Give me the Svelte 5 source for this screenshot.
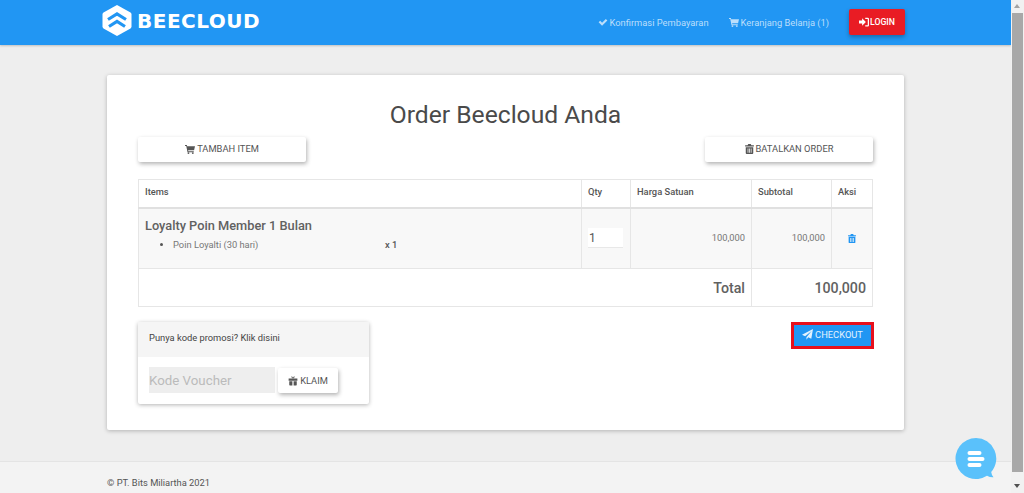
<script>
	const blue = '#2196f3';
</script>

<div class="shell">
	<div class="page">
		<header class="nav">
			<a class="brand" href="#top">
				<svg width="30" height="33" viewBox="0 0 30 33">
					<path d="M15 1 L28.5 8.6 Q29.5 9.2 29.5 10.4 V22.6 Q29.5 23.8 28.5 24.4 L15 32 L1.5 24.4 Q.5 23.8 .5 22.6 V10.4 Q.5 9.2 1.5 8.6Z" fill="#fff" />
					<path d="M6 15.5 L15 10 L24 15.5 M7 22.5 L15 17.5 L23 22.5" fill="none" stroke={blue} stroke-width="3.2" />
				</svg>
				<span class="brand-name">BEECLOUD</span>
			</a>
			<nav class="links">
				<a href="#top">
					<svg width="10" height="10" viewBox="0 0 16 16"><path d="M1 8.5 L3.5 6 L6.5 9 L12.5 3 L15 5.5 L6.5 14Z" fill="currentColor" /></svg>
					Konfirmasi Pembayaran
				</a>
				<a href="#top">
					<svg width="10" height="10" viewBox="0 0 16 16"><path d="M0 1.5h3l.5 2H16l-1.5 6.5H5l.3 1.500H14v1.500H4L2 3H0Z" fill="currentColor" /><circle cx="5.500" cy="14.500" r="1.500" fill="currentColor" /><circle cx="12.500" cy="14.500" r="1.500" fill="currentColor" /></svg>
					Keranjang Belanja (1)
				</a>
				<button class="login">
					<svg width="10" height="10" viewBox="0 0 16 16"><path d="M0 5.500h5V2l6 6-6 6v-3.500H0Z M10 1h4a2 2 0 0 1 2 2v10a2 2 0 0 1-2 2h-4v-2h4V3h-4Z" fill="currentColor" /></svg>
					LOGIN
				</button>
			</nav>
		</header>

		<main class="main">
			<section class="card">
				<h1>Order Beecloud Anda</h1>
				<div class="actions">
					<button class="btn wide">
						<svg width="10" height="10" viewBox="0 0 16 16"><path d="M0 1.500h3l.5 2H16l-1.500 6.500H5l.3 1.500H14v1.500H4L2 3H0Z" fill="currentColor" /><circle cx="5.500" cy="14.500" r="1.500" fill="currentColor" /><circle cx="12.500" cy="14.500" r="1.500" fill="currentColor" /></svg>
						TAMBAH ITEM
					</button>
					<button class="btn wide">
						<svg width="9" height="10" viewBox="0 0 14 16"><path d="M5 0h4l1 2h4v2H0V2h4ZM1 5h12v9.500a1.500 1.500 0 0 1-1.500 1.500h-9A1.500 1.500 0 0 1 1 14.500ZM4 7v7h1.200V7Zm2.400 0v7h1.200V7ZM9 7v7h1.200V7Z" fill="currentColor" fill-rule="evenodd" /></svg>
						BATALKAN ORDER
					</button>
				</div>

				<table>
					<colgroup>
						<col style="width: 443px" />
						<col style="width: 49px" />
						<col style="width: 121px" />
						<col style="width: 80px" />
						<col style="width: 41px" />
					</colgroup>
					<thead>
						<tr>
							<th>Items</th>
							<th>Qty</th>
							<th>Harga Satuan</th>
							<th>Subtotal</th>
							<th>Aksi</th>
						</tr>
					</thead>
					<tbody>
						<tr class="item">
							<td>
								<h4>Loyalty Poin Member 1 Bulan</h4>
								<ul>
									<li><span class="li-name">Poin Loyalti (30 hari)</span><b>x 1</b></li>
								</ul>
							</td>
							<td><input class="qty" value="1" /></td>
							<td class="num">100,000</td>
							<td class="num">100,000</td>
							<td class="aksi">
								<svg width="8" height="9" viewBox="0 0 14 16"><path d="M5 0h4l1 2h4v2H0V2h4ZM1 5h12v9.500a1.500 1.500 0 0 1-1.500 1.500h-9A1.500 1.500 0 0 1 1 14.500ZM4 7v7h1.200V7Zm2.400 0v7h1.200V7ZM9 7v7h1.200V7Z" fill="currentColor" fill-rule="evenodd" /></svg>
							</td>
						</tr>
						<tr class="total">
							<td colspan="3">Total</td>
							<td colspan="2">100,000</td>
						</tr>
					</tbody>
				</table>

				<div class="bottom">
					<div class="promo">
						<div class="promo-head">Punya kode promosi? Klik disini</div>
						<div class="promo-body">
							<input class="voucher" placeholder="Kode Voucher" />
							<button class="btn klaim">
								<svg width="10" height="10" viewBox="0 0 16 16"><path d="M1 4h14v3.500H1ZM2 8.500h5V15H3a1 1 0 0 1-1-1Zm7 0h5V14a1 1 0 0 1-1 1H9ZM8 4 5 1.500C6.500-.5 8 1.500 8 4Zm0 0 3-2.500C9.500-.5 8 1.500 8 4Z" fill="currentColor" /></svg>
								KLAIM
							</button>
						</div>
					</div>
					<button class="checkout">
						<svg width="11" height="11" viewBox="0 0 16 16"><path d="M16 0 13.500 14 9 12l-2.500 3.500V12L14 3 4.500 10.500 0 8.500Z" fill="currentColor" /></svg>
						CHECKOUT
					</button>
				</div>
			</section>
		</main>

		<footer class="foot">© PT. Bits Miliartha 2021</footer>
	</div>

	<div class="scrollbar">
		<span class="arrow up"></span>
		<span class="thumb"></span>
		<span class="arrow down"></span>
	</div>

	<div class="chat">
		<svg width="44" height="44" viewBox="0 0 44 44">
			<path d="M22 1a20.500 20.500 0 1 0 11 37.800q3 1.700 6.500 1.500-2-2.500-2.300-5.300A20.500 20.500 0 0 0 22 1Z" fill="#5ac1fb" />
			<rect x="13.500" y="14" width="14" height="4" rx="2" fill="#fff" />
			<rect x="13.500" y="20" width="17" height="4" rx="2" fill="#fff" />
			<rect x="13.500" y="26" width="14" height="4" rx="2" fill="#fff" />
		</svg>
	</div>
</div>

<style>
	:global(body) {
		margin: 0;
		overflow: hidden;
	}
	.shell {
		display: flex;
		height: 493px;
		font-family: Roboto, 'Liberation Sans', sans-serif;
		color: #555;
		overflow: hidden;
		position: relative;
	}
	.page {
		flex: 1;
		min-width: 0;
		background: #eee;
		display: flex;
		flex-direction: column;
	}
	button {
		font-family: inherit;
		border: 0;
		cursor: pointer;
	}

	.nav {
		height: 45px;
		flex-shrink: 0;
		background: #2196f3;
		box-shadow: 0 1px 2px rgba(0, 0, 0, 0.2);
		display: flex;
		align-items: center;
		justify-content: space-between;
		padding: 0 106px 0 102px;
	}
	.brand {
		display: flex;
		align-items: center;
		gap: 5px;
		text-decoration: none;
		margin-top: -4px;
	}
	.brand-name {
		font-family: 'DejaVu Sans', sans-serif;
		font-weight: 700;
		font-size: 20px;
		letter-spacing: 0.5px;
		color: #fff;
	}
	.links {
		display: flex;
		align-items: center;
		margin-top: -1px;
	}
	.links a {
		color: #bbdefb;
		text-decoration: none;
		font-size: 9.330px;
		display: flex;
		align-items: center;
		gap: 2px;
		margin-right: 20px;
	}
	.login {
		width: 56px;
		height: 26px;
		background: #e91c24;
		color: #fff;
		border-radius: 2px;
		font-size: 8.700px;
		font-weight: 500;
		display: flex;
		align-items: center;
		justify-content: center;
		gap: 1px;
		box-shadow: 0 2px 4px rgba(0, 0, 0, 0.3);
	}

	.main {
		flex: 1;
		padding: 30px 107px 0;
	}
	.card {
		width: 797px;
		height: 355px;
		box-sizing: border-box;
		background: #fff;
		border-radius: 2px;
		box-shadow: 0 1px 4px rgba(0, 0, 0, 0.25);
		padding: 24px 31px 0;
	}
	h1 {
		margin: 0;
		text-align: center;
		font-size: 24.650px;
		font-weight: 400;
		line-height: 32px;
		color: #4a4a4a;
	}
	.actions {
		display: flex;
		justify-content: space-between;
		margin-top: 6px;
		width: 735px;
	}
	.btn {
		background: #fff;
		color: #555;
		font-size: 9.330px;
		border-radius: 2px;
		height: 25px;
		padding: 0 0 2px;
		box-shadow: 1px 2px 4px rgba(0, 0, 0, 0.3);
		display: flex;
		align-items: center;
		justify-content: center;
		gap: 2px;
	}
	.wide {
		width: 168px;
	}

	table {
		width: 734px;
		margin-top: 17px;
		border-collapse: collapse;
		table-layout: fixed;
		font-size: 9.330px;
	}
	th,
	td {
		border: 1px solid #e6e6e6;
		padding: 0 6px;
	}
	th {
		height: 28px;
		text-align: left;
		font-weight: 500;
		padding-bottom: 3px;
		border-bottom-width: 2px;
		border-bottom-color: #e0e0e0;
		box-sizing: border-box;
	}
	.item td {
		height: 61px;
		background: #f8f8f8;
		box-sizing: border-box;
	}
	.item td:first-child {
		vertical-align: top;
		padding-top: 8px;
	}
	h4 {
		margin: 0;
		font-size: 12.800px;
		line-height: 17px;
		font-weight: 500;
		color: #616161;
	}
	ul {
		margin: 4px 0 0;
		padding-left: 28px;
		line-height: 14px;
	}
	.li-name {
		display: inline-block;
		width: 212px;
		color: #777;
	}
	li b {
		font-weight: 500;
	}
	.qty {
		width: 35px;
		height: 20px;
		box-sizing: border-box;
		border: 0;
		border-bottom: 1px solid #e8e8e8;
		background: #fff;
		font: 12px Roboto, sans-serif;
		color: #555;
		padding: 0 1px;
		display: block;
	}
	.item .num {
		text-align: right;
		color: #777;
		padding-bottom: 2px;
	}
	.aksi {
		color: #2196f3;
		text-align: center;
	}
	.aksi svg {
		display: block;
		margin: 0 auto;
	}
	.total td {
		height: 38px;
		box-sizing: border-box;
		text-align: right;
		font-weight: 500;
		font-size: 14.200px;
		color: #616161;
	}

	.bottom {
		width: 736px;
		margin-top: 15px;
		display: flex;
		justify-content: space-between;
		align-items: flex-start;
	}
	.promo {
		width: 231px;
		height: 82px;
		border-radius: 2px;
		box-shadow: 0 1px 4px rgba(0, 0, 0, 0.3);
	}
	.promo-head {
		height: 35px;
		background: #f5f5f5;
		font-size: 9.330px;
		line-height: 32px;
		padding-left: 11px;
		color: #444;
	}
	.promo-body {
		display: flex;
		gap: 3px;
		padding: 10px 11px 0;
	}
	.voucher {
		width: 126px;
		height: 26px;
		box-sizing: border-box;
		border: 0;
		background: #eee;
		font: 13.300px Roboto, sans-serif;
		padding: 0;
	}
	.voucher::placeholder {
		color: #bbb;
	}
	.klaim {
		width: 60px;
		margin-top: 1px;
		padding: 0;
	}
	.checkout {
		width: 83px;
		height: 27px;
		background: #2196f3;
		border: 3px solid #e8101c;
		box-sizing: border-box;
		color: #e3f2fd;
		font-size: 9.330px;
		display: flex;
		align-items: center;
		justify-content: center;
		gap: 2px;
		padding: 0 0 2px;
	}

	.foot {
		height: 32px;
		flex-shrink: 0;
		box-sizing: border-box;
		background: #f3f3f3;
		border-top: 1px solid #e4e4e4;
		padding: 15px 0 0 107px;
		font-size: 9.330px;
		line-height: 12px;
		color: #555;
	}

	.scrollbar {
		width: 13px;
		flex-shrink: 0;
		background: #f1f1f1;
		display: flex;
		flex-direction: column;
		align-items: stretch;
	}
	.thumb {
		flex: 1;
		background: #a8a8a8;
		margin: 0 1px 8px 1px;
	}
	.arrow {
		height: 13px;
		flex-shrink: 0;
		position: relative;
	}
	.arrow::after {
		content: '';
		position: absolute;
		left: 3px;
		top: 4px;
		border-left: 3.500px solid transparent;
		border-right: 3.500px solid transparent;
	}
	.up::after {
		border-bottom: 4px solid #a3a3a3;
	}
	.down::after {
		border-top: 4px solid #505050;
	}

	.chat {
		position: absolute;
		left: 954px;
		top: 437px;
		line-height: 0;
	}
</style>
